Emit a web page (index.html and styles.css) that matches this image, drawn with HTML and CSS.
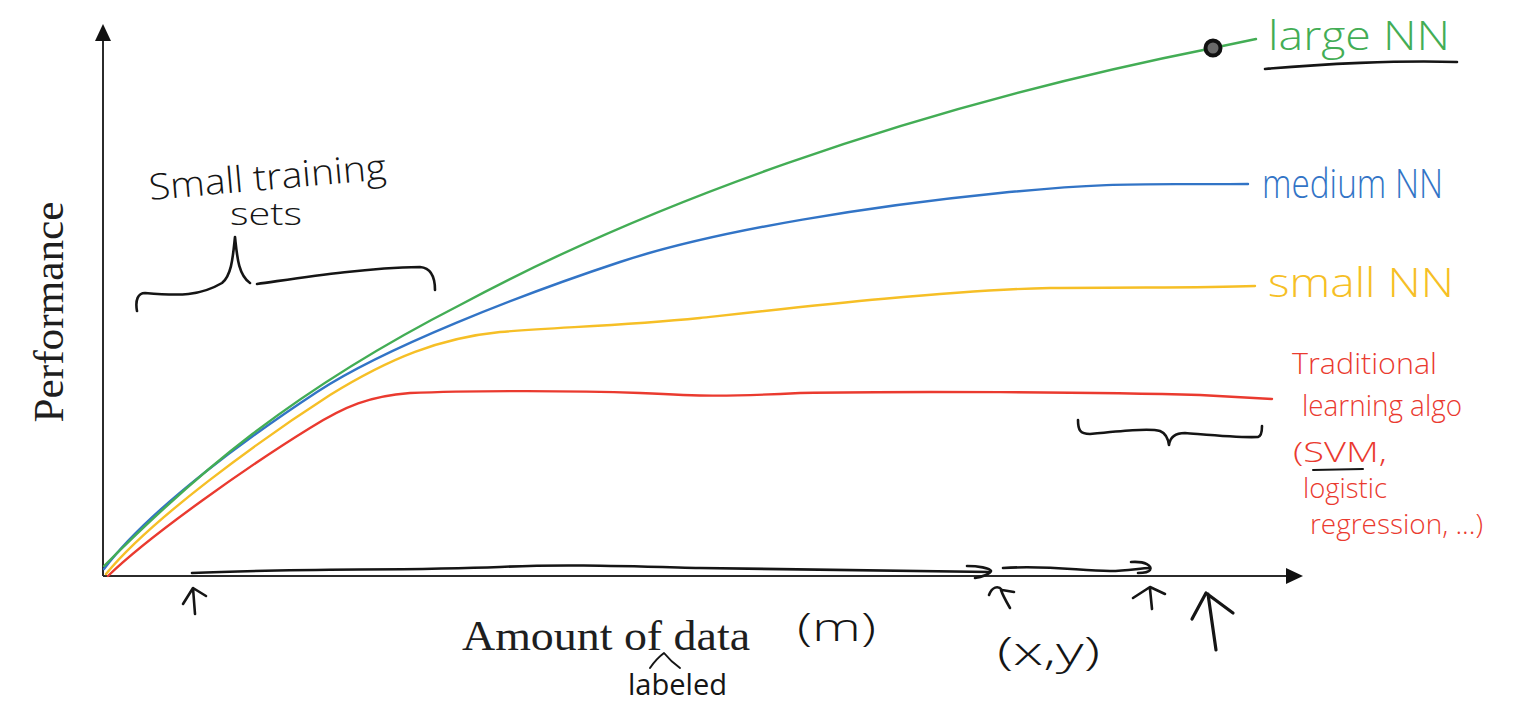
FILE: index.html
```html
<!DOCTYPE html>
<html lang="en">
<head>
<meta charset="utf-8">
<title>Performance vs amount of data</title>
<link rel="stylesheet" href="styles.css">
</head>
<body>
<figure class="chart">
<svg class="plot" width="1522" height="708" viewBox="0 0 1522 708" xmlns="http://www.w3.org/2000/svg">
  <!-- axes -->
  <line class="axis" x1="103" y1="40" x2="103" y2="576"/>
  <polygon class="axis-head" points="95,41 111,41 103,24"/>
  <line class="axis" x1="103" y1="576" x2="1288" y2="576"/>
  <polygon class="axis-head" points="1286,568 1286,584 1303,576"/>

  <!-- curves -->
  <path class="curve red" d="M108,576 C150,535 250,465 310,428 C345,406 370,396 410,393 C460,391 560,390 640,393 C700,396 720,397 800,393 C900,391 1100,392 1200,395 L1272,399"/>
  <path class="curve yellow" d="M106,574 C150,520 260,440 330,395 C390,358 440,338 500,332 C560,327 620,326 700,318 C800,307 950,290 1050,288 C1150,287 1200,288 1255,286"/>
  <path class="curve blue" d="M104,569 C150,508 250,436 317,392 S520,295 620,262 S880,205 1000,193 S1150,185 1248,184"/>
  <path class="curve green" d="M104,566 C195,475 290,392 460,305 C640,208 900,110 1213,48 L1256,39"/>
  <circle class="dot" cx="1213" cy="48" r="7.5"/>

  <!-- annotations (ink) -->
  <path class="ink" d="M137,311 C135,300 138,293 145,293 C180,296 200,296 222,283 C232,275 233,255 235,237 C237,255 238,275 250,283"/>
  <path class="ink" d="M257,284 C300,278 360,268 420,267 C432,268 435,278 435,290"/>
  <path class="ink" d="M1078,420 C1078,430 1080,434 1090,434 C1120,431 1150,428 1160,431 C1165,433 1168,438 1169,445 C1170,438 1175,433 1185,433 C1210,435 1240,438 1258,437 C1262,436 1262,430 1262,426"/>
  <path class="ink" d="M1265,69 C1320,64 1400,60 1457,62"/>
  <path class="ink thin" d="M1313,470 L1363,469"/>

  <path class="ink" d="M192,573 C300,568 400,571 500,567 C560,564 620,566 700,568 C800,570 900,571 990,572"/>
  <path class="ink" d="M967,566 C978,566 990,568 991,571 C990,574 982,577 975,578"/>
  <path class="ink" d="M1003,568 C1050,565 1080,571 1110,571 C1128,571 1140,568 1150,568"/>
  <path class="ink" d="M1131,562 C1146,561 1152,566 1150,570 C1148,573 1142,573 1138,573"/>

  <path class="ink" d="M195,614 L193,588 M183,604 L193,588 L206,596"/>
  <path class="ink" d="M1010,608 C1006,601 1003,596 1001,590 M989,595 C992,587 998,585 1002,590 L1014,592"/>
  <path class="ink" d="M1152,609 L1150,589 M1133,598 L1150,587 L1165,594"/>
  <path class="ink bold" d="M1216,650 L1208,594 M1192,619 L1206,593 L1233,613"/>
  <path class="ink thin" d="M650,668 C654,662 660,656 664,653 C668,658 673,663 680,668"/>

  <!-- serif axis labels -->
  <text class="serif" transform="translate(63,312) rotate(-90)" text-anchor="middle" textLength="221" lengthAdjust="spacingAndGlyphs">Performance</text>
  <text class="serif" x="462" y="650" textLength="288" lengthAdjust="spacingAndGlyphs">Amount of data</text>

  <!-- handwritten notes -->
  <text class="hand black s36" x="150" y="200" transform="rotate(-5 150 200)" textLength="238" lengthAdjust="spacingAndGlyphs">Small training</text>
  <text class="hand black s32" x="230" y="225" textLength="72" lengthAdjust="spacingAndGlyphs">sets</text>

  <text class="hand green-t s40" x="1268" y="50" textLength="182" lengthAdjust="spacingAndGlyphs">large NN</text>
  <text class="hand blue-t s40" x="1262" y="198" textLength="181" lengthAdjust="spacingAndGlyphs">medium NN</text>
  <text class="hand yellow-t s40" x="1268" y="297" textLength="186" lengthAdjust="spacingAndGlyphs">small NN</text>

  <text class="hand red-t s30" x="1292" y="374" textLength="145" lengthAdjust="spacingAndGlyphs">Traditional</text>
  <text class="hand red-t s30" x="1302" y="416" textLength="160" lengthAdjust="spacingAndGlyphs">learning algo</text>
  <text class="hand red-t s27" x="1293" y="462" textLength="94" lengthAdjust="spacingAndGlyphs">(SVM,</text>
  <text class="hand red-t s27" x="1303" y="498" textLength="84" lengthAdjust="spacingAndGlyphs">logistic</text>
  <text class="hand red-t s27" x="1310" y="534" textLength="173" lengthAdjust="spacingAndGlyphs">regression, ...)</text>

  <text class="hand black s38" x="797" y="641" textLength="79" lengthAdjust="spacingAndGlyphs">(m)</text>
  <text class="hand black s38" x="997" y="665" textLength="103" lengthAdjust="spacingAndGlyphs">(x,y)</text>
  <text class="hand black s30 regular" x="628" y="695" textLength="99" lengthAdjust="spacingAndGlyphs">labeled</text>
</svg>
</figure>
</body>
</html>
```
FILE: styles.css
```css
html, body {
  margin: 0;
  padding: 0;
  background: #ffffff;
}

.chart {
  margin: 0;
  width: 1522px;
  height: 708px;
  overflow: hidden;
}

.plot {
  display: block;
}

.axis {
  stroke: #2b2b2b;
  stroke-width: 2;
}

.axis-head {
  fill: #111111;
}

.curve {
  fill: none;
  stroke-width: 2.4;
  stroke-linejoin: round;
  stroke-linecap: round;
}

.curve.green { stroke: #43ad55; }
.curve.blue { stroke: #3274c6; }
.curve.yellow { stroke: #f6bf26; }
.curve.red { stroke: #ea3a2f; }

.dot {
  fill: #6a6a6a;
  stroke: #111111;
  stroke-width: 4;
}

.ink {
  fill: none;
  stroke: #151515;
  stroke-width: 2.6;
  stroke-linecap: round;
  stroke-linejoin: round;
}

.ink.thin { stroke-width: 2; }
.ink.bold { stroke-width: 3.2; }

.serif {
  font-family: "Liberation Serif", "Times New Roman", serif;
  font-size: 42px;
  fill: #1e1e1e;
}

.hand {
  font-family: "Open Sans", "DejaVu Sans", sans-serif;
  font-weight: 300;
}

.hand.regular { font-weight: 400; }

.s27 { font-size: 27px; }
.s30 { font-size: 30px; }
.s32 { font-size: 32px; }
.s36 { font-size: 36px; }
.s38 { font-size: 38px; }
.s40 { font-size: 40px; }

.black { fill: #151515; }
.green-t { fill: #43ad55; }
.blue-t { fill: #3274c6; }
.yellow-t { fill: #f6bf26; }
.red-t { fill: #ea3a2f; }
```
